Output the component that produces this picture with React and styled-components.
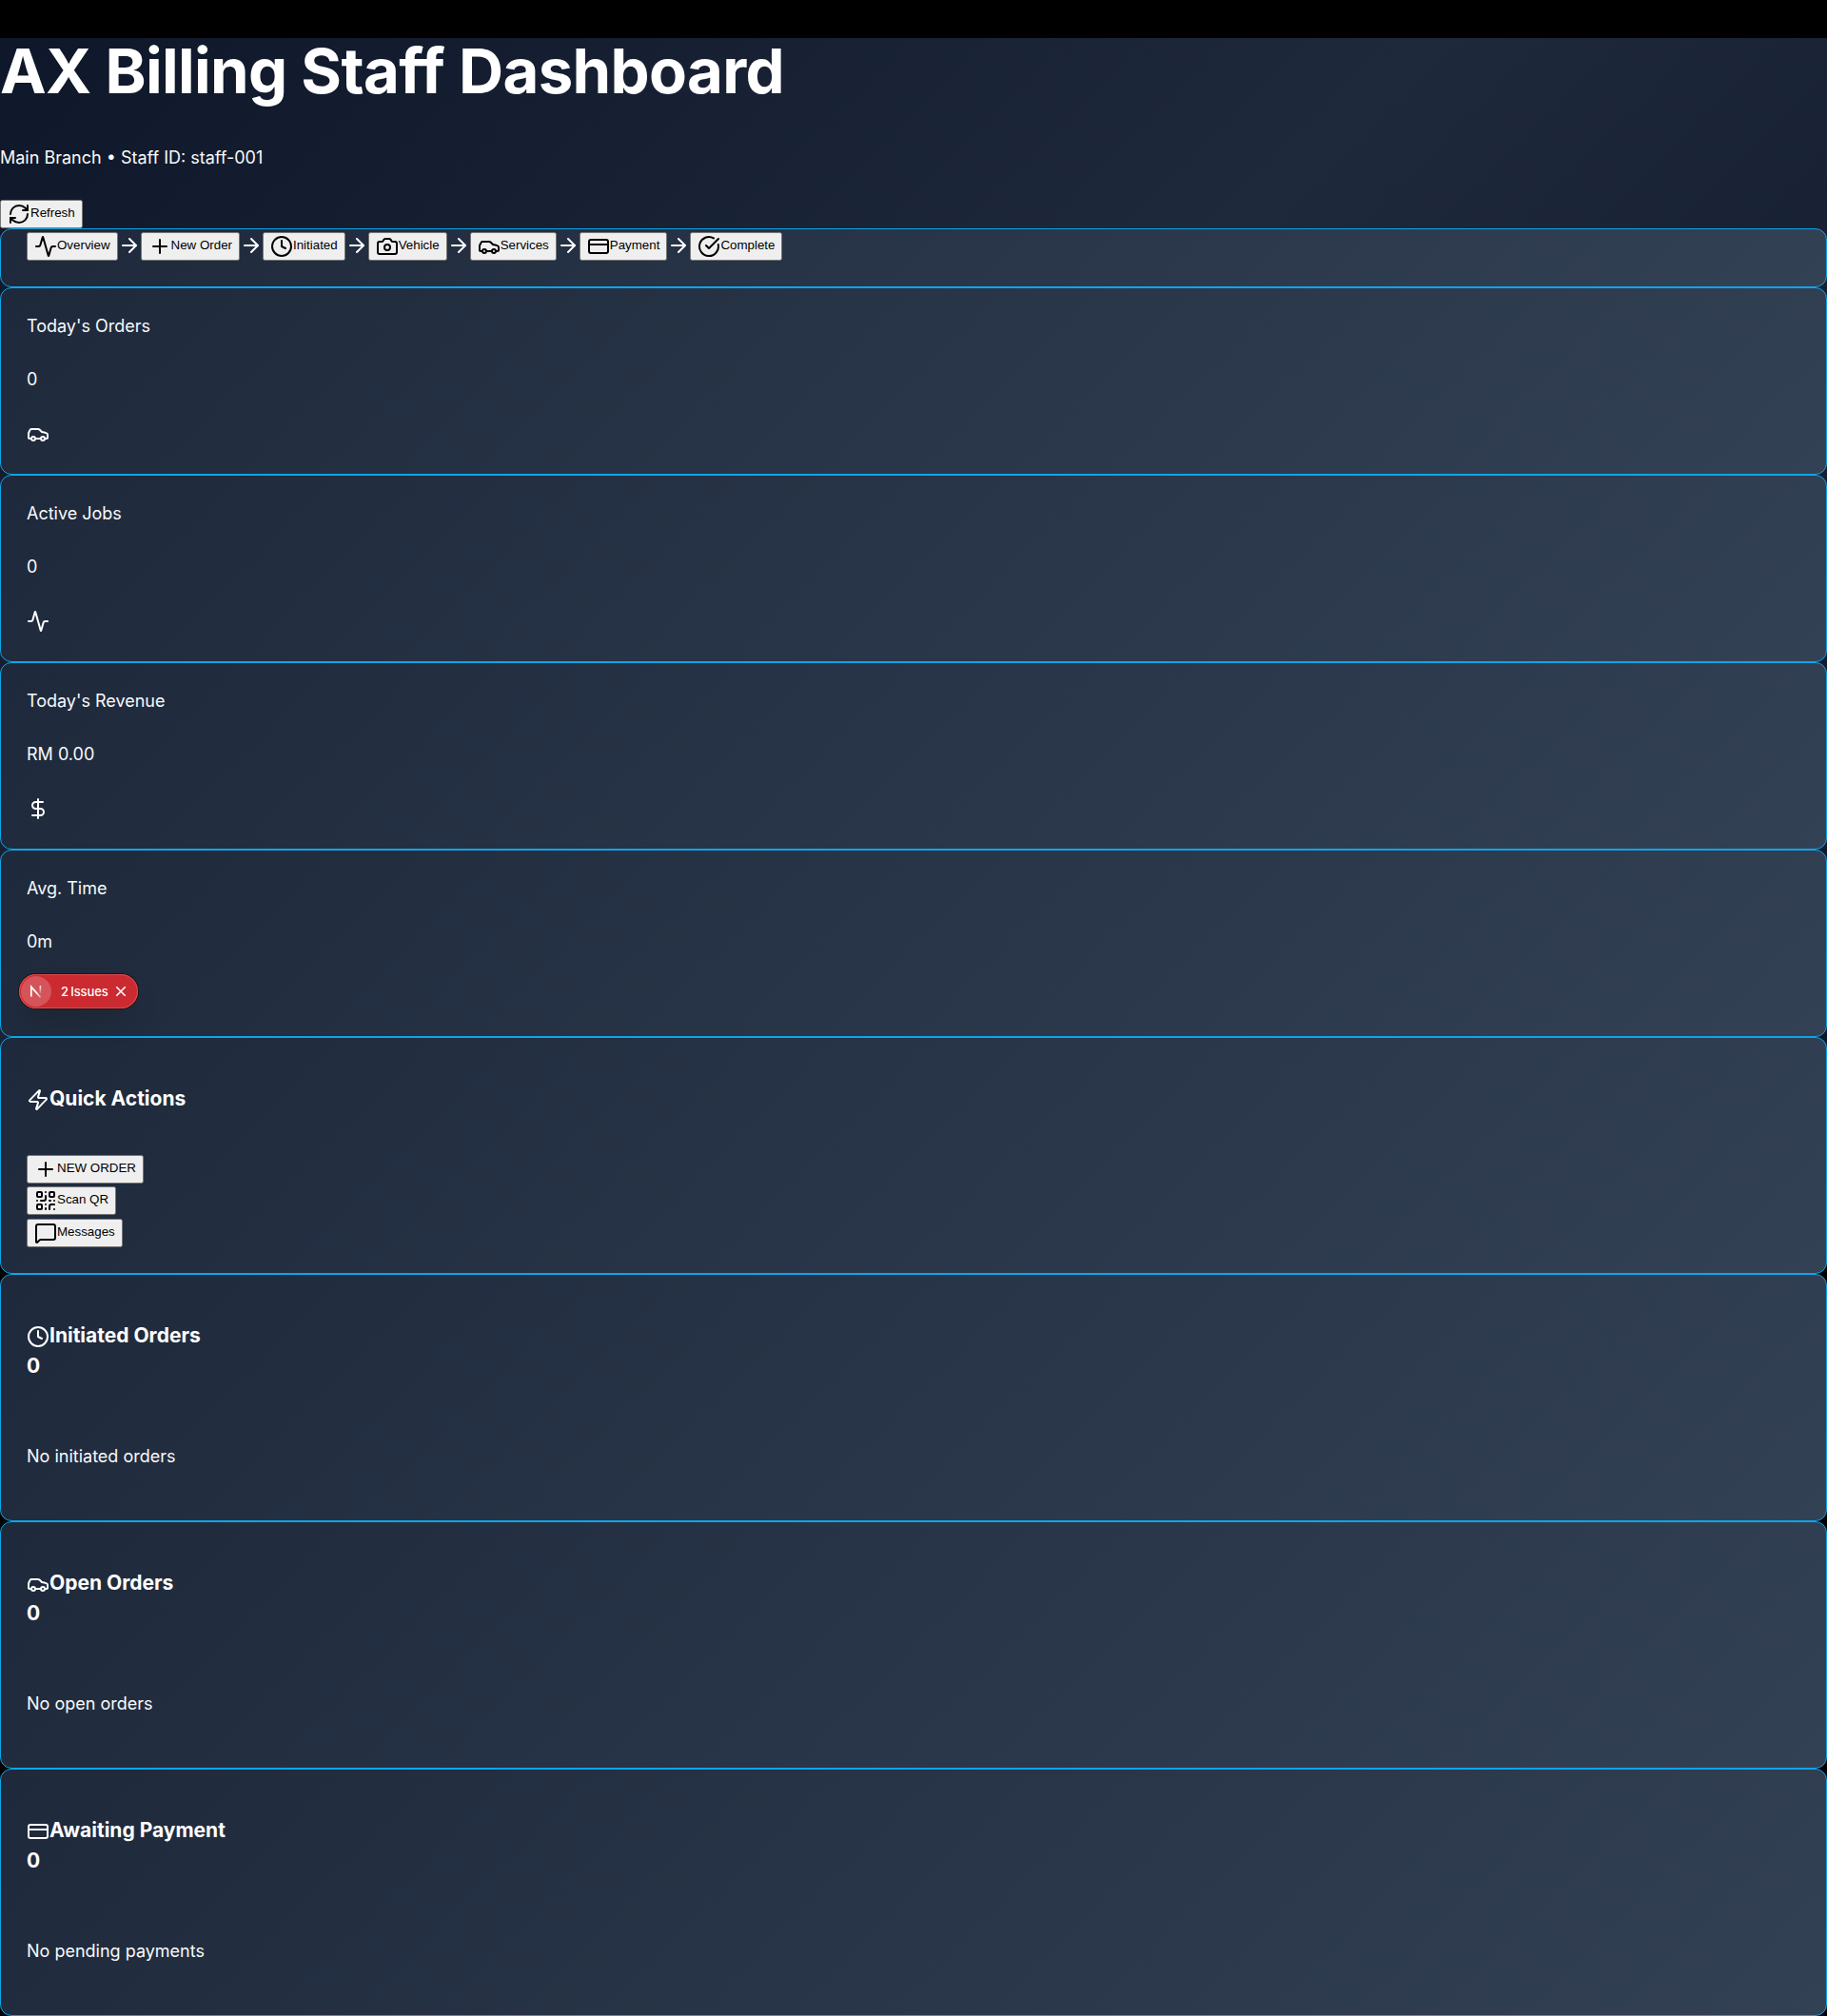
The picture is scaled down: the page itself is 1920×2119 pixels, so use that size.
import React from "react";
import styled, { createGlobalStyle } from "styled-components";
import {
  Activity,
  ArrowRight,
  Camera,
  Car,
  CircleCheckBig,
  Clock,
  CreditCard,
  DollarSign,
  MessageSquare,
  Plus,
  QrCode,
  RefreshCw,
  Zap,
} from "lucide-react";

const GlobalStyle = createGlobalStyle`
  html { background: #000; }
  body {
    margin: 0;
    background: #000;
    color: #fff;
    font-family: Inter, sans-serif;
    font-size: 18px;
    line-height: 1.7;
  }
  svg { vertical-align: middle; }
`;

const Page = styled.div`
  position: relative;
  border-top: 40px solid #000;
  background: linear-gradient(135deg, #0f172a 0%, #1e293b 50%, #0f172a 100%) 0 0 / 100% 1080px no-repeat;
`;

const Header = styled.header`
  height: 200px;
`;

const Title = styled.h1`
  margin: 0 0 44px;
  font-size: 65.25px;
  font-weight: 700;
  line-height: 69px;
  letter-spacing: -0.01em;
`;

const Text = styled.p`
  margin: 0 0 ${(p) => p.$gap}px;
  color: #f8fafc;
  line-height: 25px;
`;

const Button = styled.button`
  svg { vertical-align: -9.5px; }
`;

const Card = styled.section`
  box-sizing: border-box;
  height: ${(p) => p.$height}px;
  padding: 27px;
  border: 1px solid #0ea5e9;
  border-radius: 12px;
  background: linear-gradient(135deg, #1e293b 0%, #334155 100%);
`;

const StepBar = styled(Card)`
  padding-top: 0;
  line-height: 27.4px;

  > svg { vertical-align: -9px; }
`;

const CardTitle = styled.h3`
  margin: 21px 0 39.4px;
  font-size: 21px;
  font-weight: 700;
  line-height: 32px;
`;

const Empty = styled.div`
  padding: 26.6px 0;
`;

const Badge = styled.div`
  position: absolute;
  left: 20px;
  top: 984px;
  display: flex;
  align-items: center;
  box-sizing: border-box;
  width: 125px;
  height: 36px;
  padding: 2px;
  border-radius: 18px;
  background: #ca2a30;
  box-shadow: 0 0 0 1px #171717, inset 0 0 0 1px #e5484d, 0 16px 32px -8px rgba(0, 0, 0, 0.24);
  font-size: 13px;
  font-weight: 500;
  line-height: 16px;
`;

const BadgeLogo = styled.span`
  display: grid;
  place-items: center;
  width: 32px;
  height: 32px;
  border-radius: 50%;
  background: rgba(255, 255, 255, 0.2);
`;

const BadgeText = styled.span`
  width: 49px;
  margin-left: 10px;
  letter-spacing: -0.1px;
  word-spacing: -1px;
  white-space: nowrap;
`;

const BadgeClose = styled.svg`
  margin-left: 8px;
`;

const steps = [
  ["Overview", Activity],
  ["New Order", Plus],
  ["Initiated", Clock],
  ["Vehicle", Camera],
  ["Services", Car],
  ["Payment", CreditCard],
  ["Complete", CircleCheckBig],
];

const stats = [
  ["Today's Orders", "0", Car],
  ["Active Jobs", "0", Activity],
  ["Today's Revenue", "RM 0.00", DollarSign],
  ["Avg. Time", "0m", Clock],
];

const actions = [
  ["NEW ORDER", Plus],
  ["Scan QR", QrCode],
  ["Messages", MessageSquare],
];

const queues = [
  ["Initiated Orders", "No initiated orders", Clock],
  ["Open Orders", "No open orders", Car],
  ["Awaiting Payment", "No pending payments", CreditCard],
];

export default function App() {
  return (
    <>
      <GlobalStyle />
      <Page>
        <Header>
          <Title>AX Billing Staff Dashboard</Title>
          <Text $gap={28.5}>Main Branch • Staff ID: staff-001</Text>
          <div>
            <Button><RefreshCw />Refresh</Button>
          </div>
        </Header>
        <StepBar as="nav" $height={62}>
          {steps.map(([label, Icon], i) => (
            <React.Fragment key={label}>
              {i > 0 && <ArrowRight />}
              <Button><Icon />{label}</Button>
            </React.Fragment>
          ))}
        </StepBar>
        {stats.map(([label, value, Icon]) => (
          <Card key={label} $height={197}>
            <Text $gap={31}>{label}</Text>
            <Text $gap={28.9}>{value}</Text>
            <Icon />
          </Card>
        ))}
        <Card $height={249}>
          <CardTitle><Zap />Quick Actions</CardTitle>
          {actions.map(([label, Icon]) => (
            <div key={label}>
              <Button><Icon />{label}</Button>
            </div>
          ))}
        </Card>
        {queues.map(([label, empty, Icon]) => (
          <Card key={label} $height={260}>
            <CardTitle>
              <Icon />{label}
              <div>0</div>
            </CardTitle>
            <Empty>
              <Text $gap={0}>{empty}</Text>
            </Empty>
          </Card>
        ))}
        <Badge>
          <BadgeLogo>
            <svg width="14" height="14" viewBox="0 0 14 14" fill="none">
              <defs>
                <linearGradient id="stem" x1="0" y1="1" x2="0" y2="10" gradientUnits="userSpaceOnUse">
                  <stop stopColor="#fff" />
                  <stop offset="1" stopColor="#fff" stopOpacity="0" />
                </linearGradient>
                <linearGradient id="slash" x1="8" y1="8" x2="13" y2="14" gradientUnits="userSpaceOnUse">
                  <stop stopColor="#fff" />
                  <stop offset="1" stopColor="#fff" stopOpacity="0.2" />
                </linearGradient>
              </defs>
              <path d="M1.8 12.4V2.2L11.6 13.4" stroke="url(#slash)" strokeWidth="1.7" />
              <path d="M11.4 1.2v9" stroke="url(#stem)" strokeWidth="1.6" />
            </svg>
          </BadgeLogo>
          <BadgeText>2 Issues</BadgeText>
          <BadgeClose width="12" height="12" viewBox="0 0 12 12" fill="none">
            <path d="M1.3 1.3l9.4 9.4M10.7 1.3l-9.4 9.4" stroke="#fff" strokeWidth="1.6" />
          </BadgeClose>
        </Badge>
      </Page>
    </>
  );
}
